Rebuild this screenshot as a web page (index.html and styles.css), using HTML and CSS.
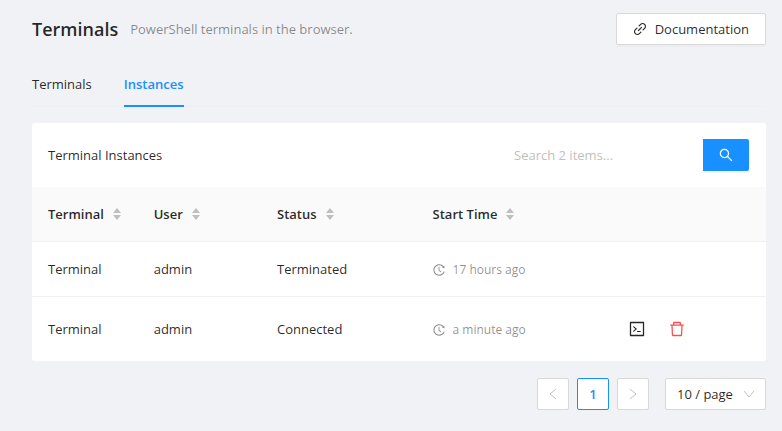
FILE: index.html
```html
<!DOCTYPE html>
<html lang="en">
<head>
<meta charset="utf-8">
<title>Terminals</title>
<link rel="stylesheet" href="styles.css">
</head>
<body>
<svg class="sprite" aria-hidden="true">
  <symbol id="link" viewBox="64 64 896 896"><path d="M574 665.4a8.03 8.03 0 0 0-11.3 0L446.5 781.6c-53.8 53.8-144.6 59.5-204 0-59.5-59.5-53.8-150.2 0-204l116.2-116.2c3.1-3.1 3.1-8.2 0-11.3l-39.8-39.8a8.03 8.03 0 0 0-11.3 0L191.4 526.5c-84.6 84.6-84.6 221.5 0 306s221.5 84.6 306 0l116.2-116.2c3.1-3.1 3.1-8.2 0-11.3L574 665.4zm258.6-474c-84.6-84.6-221.5-84.6-306 0L410.3 307.6a8.03 8.03 0 0 0 0 11.3l39.7 39.7c3.1 3.1 8.2 3.1 11.3 0l116.2-116.2c53.8-53.8 144.6-59.5 204 0 59.5 59.5 53.8 150.2 0 204L665.3 562.6a8.03 8.03 0 0 0 0 11.3l39.8 39.8c3.1 3.1 8.2 3.1 11.3 0l116.2-116.2c84.5-84.6 84.5-221.5 0-306.1zM610.1 372.3a8.03 8.03 0 0 0-11.3 0L372.3 598.7a8.03 8.03 0 0 0 0 11.3l39.6 39.6c3.1 3.1 8.2 3.1 11.3 0l226.4-226.4c3.1-3.1 3.1-8.2 0-11.3l-39.5-39.6z"/></symbol>
  <symbol id="search" viewBox="64 64 896 896"><path d="M909.6 854.5L649.9 594.8C690.2 542.7 712 479 712 412c0-80.2-31.3-155.4-87.9-212.1-56.6-56.7-132-87.9-212.1-87.9s-155.5 31.3-212.1 87.9C143.2 256.5 112 331.8 112 412c0 80.1 31.3 155.5 87.9 212.1C256.5 680.8 331.8 712 412 712c67 0 130.6-21.8 182.7-62l259.7 259.6a8.2 8.2 0 0 0 11.6 0l43.6-43.5a8.2 8.2 0 0 0 0-11.6zM570.4 570.4C528 612.7 471.8 636 412 636s-116-23.3-158.4-65.6C211.3 528 188 471.8 188 412s23.3-116.1 65.6-158.4C296 211.3 352.2 188 412 188s116.1 23.2 158.4 65.6S636 352.2 636 412s-23.3 116.1-65.6 158.4z"/></symbol>
  <symbol id="history" viewBox="64 64 896 896"><path d="M536.1 273H488c-4.4 0-8 3.6-8 8v275.3c0 2.6 1.2 5 3.3 6.5l165.3 120.7c3.6 2.6 8.6 1.9 11.2-1.7l28.6-39c2.7-3.7 1.9-8.7-1.7-11.2L544.1 528.5V281c0-4.4-3.6-8-8-8zm219.8 75.2l156.8 38.3c5 1.2 9.9-2.6 9.9-7.7l.8-161.5c0-6.7-7.7-10.5-12.9-6.3L752.9 334.1a8 8 0 0 0 3 14.1zm167.7 301.1l-56.7-19.5a8 8 0 0 0-10.1 4.8c-1.9 5.1-3.9 10.1-6 15.1-17.8 42.1-43.3 80-75.9 112.5a353 353 0 0 1-112.5 75.9 352.18 352.18 0 0 1-137.7 27.8c-47.8 0-94.1-9.3-137.7-27.8a353 353 0 0 1-112.5-75.9c-32.5-32.5-58-70.4-75.9-112.5A353.44 353.44 0 0 1 171 512c0-47.8 9.3-94.2 27.8-137.8 17.8-42.1 43.3-80 75.9-112.5a353 353 0 0 1 112.5-75.9C430.6 167.3 477 158 524.8 158s94.1 9.3 137.7 27.8A353 353 0 0 1 775 261.7c10.2 10.3 19.8 21 28.6 32.3l59.8-46.8C784.7 146.6 662.2 81.9 524.6 82 285 82.1 92.6 276.7 95 516.4 97.4 751.9 288.9 942 524.8 942c185.5 0 343.5-117.6 403.7-282.3 1.5-4.2-.7-8.9-4.9-10.4z"/></symbol>
  <symbol id="code" viewBox="64 64 896 896"><path d="M516 673c0 4.4 3.4 8 7.5 8h185c4.1 0 7.5-3.6 7.5-8v-48c0-4.4-3.4-8-7.5-8h-185c-4.1 0-7.5 3.6-7.5 8v48zm-194.9 6.1l192-161c3.8-3.2 3.8-9.1 0-12.3l-192-160.9A7.95 7.95 0 0 0 308 351v62.7c0 2.4 1 4.6 2.9 6.1L420.7 512l-109.8 92.2a8.1 8.1 0 0 0-2.9 6.1V673c0 6.8 7.9 10.5 13.1 6.1zM880 112H144c-17.7 0-32 14.3-32 32v736c0 17.7 14.3 32 32 32h736c17.7 0 32-14.3 32-32V144c0-17.7-14.3-32-32-32zm-40 728H184V184h656v656z"/></symbol>
  <symbol id="delete" viewBox="64 64 896 896"><path d="M360 184h-8c4.4 0 8-3.6 8-8v8h304v-8c0 4.4 3.6 8 8 8h-8v72h72v-80c0-35.3-28.7-64-64-64H352c-35.3 0-64 28.7-64 64v80h72v-72zm504 72H160c-17.7 0-32 14.3-32 32v32c0 4.4 3.6 8 8 8h60.4l24.7 523c1.6 34.1 29.8 61 63.9 61h454c34.2 0 62.3-26.8 63.9-61l24.7-523H888c4.4 0 8-3.6 8-8v-32c0-17.7-14.3-32-32-32zM731.3 840H292.7l-24.2-512h487l-24.2 512z"/></symbol>
  <symbol id="sort" viewBox="0 0 10 14"><path d="M5 1L9 6H1zM1 8h8L5 13z"/></symbol>
  <symbol id="left" viewBox="0 0 12 12"><path d="M9 1L3 6l6 5" fill="none" stroke="currentColor"/></symbol>
  <symbol id="right" viewBox="0 0 12 12"><path d="M3 1l6 5-6 5" fill="none" stroke="currentColor"/></symbol>
  <symbol id="down" viewBox="0 0 12 12"><path d="M1 3l5 6 5-6" fill="none" stroke="currentColor"/></symbol>
</svg>
<main class="page">
  <header class="page-header">
    <h1 class="title">Terminals</h1>
    <p class="subtitle">PowerShell terminals in the browser.</p>
    <a class="button" href="#docs"><svg class="icon"><use href="#link"/></svg>Documentation</a>
  </header>
  <nav class="tabs">
    <a class="tab" href="#terminals">Terminals</a>
    <a class="tab tab-active" href="#instances" aria-current="page">Instances</a>
  </nav>
  <section class="card">
    <div class="card-head">
      <h2 class="card-title">Terminal Instances</h2>
      <form class="search">
        <input class="search-input" type="search" placeholder="Search 2 items..." aria-label="Search items">
        <button class="search-button" type="button" aria-label="Search"><svg class="icon"><use href="#search"/></svg></button>
      </form>
    </div>
    <table class="table">
      <colgroup><col class="col-terminal"><col class="col-user"><col class="col-status"><col class="col-time"><col></colgroup>
      <thead>
        <tr>
          <th><button class="sort" type="button">Terminal<svg class="sort-icon"><use href="#sort"/></svg></button></th>
          <th><button class="sort" type="button">User<svg class="sort-icon"><use href="#sort"/></svg></button></th>
          <th><button class="sort" type="button">Status<svg class="sort-icon"><use href="#sort"/></svg></button></th>
          <th><button class="sort" type="button">Start Time<svg class="sort-icon"><use href="#sort"/></svg></button></th>
          <td></td>
        </tr>
      </thead>
      <tbody>
        <tr>
          <td>Terminal</td><td>admin</td><td>Terminated</td>
          <td><span class="time"><svg class="icon-small"><use href="#history"/></svg>17 hours ago</span></td>
          <td></td>
        </tr>
        <tr>
          <td>Terminal</td><td>admin</td><td>Connected</td>
          <td><span class="time"><svg class="icon-small"><use href="#history"/></svg>a minute ago</span></td>
          <td class="cell-actions">
            <div class="actions">
              <button class="action" type="button" aria-label="Open terminal"><svg class="icon-large"><use href="#code"/></svg></button>
              <button class="action action-danger" type="button" aria-label="Delete"><svg class="icon-large"><use href="#delete"/></svg></button>
            </div>
          </td>
        </tr>
      </tbody>
    </table>
  </section>
  <nav class="pagination" aria-label="Pagination">
    <button class="page-button" type="button" aria-label="Previous page" disabled><svg class="icon-small"><use href="#left"/></svg></button>
    <button class="page-button page-current" type="button" aria-current="page">1</button>
    <button class="page-button" type="button" aria-label="Next page" disabled><svg class="icon-small"><use href="#right"/></svg></button>
    <div class="page-size">
      <select class="page-select" aria-label="Page size"><option>10 / page</option></select>
      <svg class="icon-small page-arrow"><use href="#down"/></svg>
    </div>
  </nav>
</main>
</body>
</html>
```
FILE: styles.css
```css
* { box-sizing: border-box; }
body {
  margin: 0;
  background: #f0f2f5;
  color: rgba(0, 0, 0, 0.85);
  font: 13px/22px "Segoe UI", "Open Sans", "Noto Sans", sans-serif;
}
button, input, select { font: inherit; color: inherit; }
svg { fill: currentColor; flex: none; display: block; }
.sprite { position: absolute; width: 0; height: 0; }
.icon { width: 14px; height: 14px; }
.icon-small { width: 12px; height: 12px; }
.icon-large { width: 16px; height: 16px; }

.page { padding: 13px 16px 16px 32px; }
.page-header { display: flex; align-items: center; }
.title { margin: 0 12px 0 0; font-size: 18px; line-height: 32px; font-weight: 600; }
.subtitle { margin: 0; color: rgba(0, 0, 0, 0.45); }
.button {
  display: flex;
  align-items: center;
  gap: 8px;
  height: 32px;
  margin-left: auto;
  padding: 0 16px;
  border: 1px solid #d9d9d9;
  border-radius: 2px;
  background: #fff;
  box-shadow: 0 2px 0 rgba(0, 0, 0, 0.02);
  color: inherit;
  text-decoration: none;
}

.tabs { display: flex; gap: 32px; margin: 16px 0; border-bottom: 1px solid #eeeff2; }
.tab { padding: 12px 0; margin-bottom: -1px; color: inherit; text-decoration: none; }
.tab-active { color: #1890ff; font-weight: 600; border-bottom: 2px solid #1890ff; padding-bottom: 10px; }

.card { background: #fff; border-radius: 2px; overflow: hidden; }
.card-head { display: flex; align-items: center; justify-content: space-between; padding: 16px; padding-right: 17px; }
.card-title { margin: 0; font-size: 13px; font-weight: 400; }
.search { display: flex; }
.search-input { width: 200px; height: 32px; padding: 0 11px; border: 0; background: transparent; }
.search-input::placeholder { color: #bfbfbf; opacity: 1; }
.search-button {
  display: grid;
  place-items: center;
  width: 46px;
  height: 32px;
  padding: 0;
  border: 0;
  border-radius: 0 2px 2px 0;
  background: #1890ff;
  color: #fff;
  box-shadow: 0 2px 0 rgba(0, 0, 0, 0.04);
}

.table { width: 100%; border-collapse: separate; border-spacing: 0; table-layout: fixed; }
.col-terminal { width: 14.4%; }
.col-user { width: 16.8%; }
.col-status { width: 21.2%; }
.col-time { width: 26.8%; }
th, td { padding: 16px; text-align: left; border-bottom: 1px solid #f0f0f0; }
thead th, thead td { background: #fafafa; }
tbody tr:last-child td { border-bottom: 0; height: 64px; }
.sort { display: flex; align-items: center; gap: 8px; padding: 0; border: 0; background: none; font-weight: 600; white-space: nowrap; }
.sort-icon { width: 10px; height: 14px; color: #bfbfbf; }
.time { display: flex; align-items: center; gap: 8px; font-size: 12px; line-height: 24px; margin-bottom: -2px; color: rgba(0, 0, 0, 0.45); }
.cell-actions { padding: 8px; }
.actions { display: flex; gap: 8px; }
.action { display: grid; place-items: center; width: 32px; height: 32px; padding: 0; border: 0; background: none; }
.action-danger { color: #ff4d4f; }

.pagination { display: flex; justify-content: flex-end; gap: 8px; margin-top: 17px; }
.page-button { display: grid; place-items: center; width: 32px; height: 32px; padding: 0; border: 1px solid #d9d9d9; border-radius: 2px; background: #fff; }
.page-button:disabled { color: rgba(0, 0, 0, 0.25); }
.page-current { border-color: #1890ff; color: #1890ff; font-weight: 600; }
.page-size { position: relative; margin-left: 8px; }
.page-select { appearance: none; height: 32px; padding: 0 32px 0 11px; border: 1px solid #d9d9d9; border-radius: 2px; background: #fff; }
.page-arrow { position: absolute; right: 11px; top: 10px; color: rgba(0, 0, 0, 0.25); pointer-events: none; }
```
